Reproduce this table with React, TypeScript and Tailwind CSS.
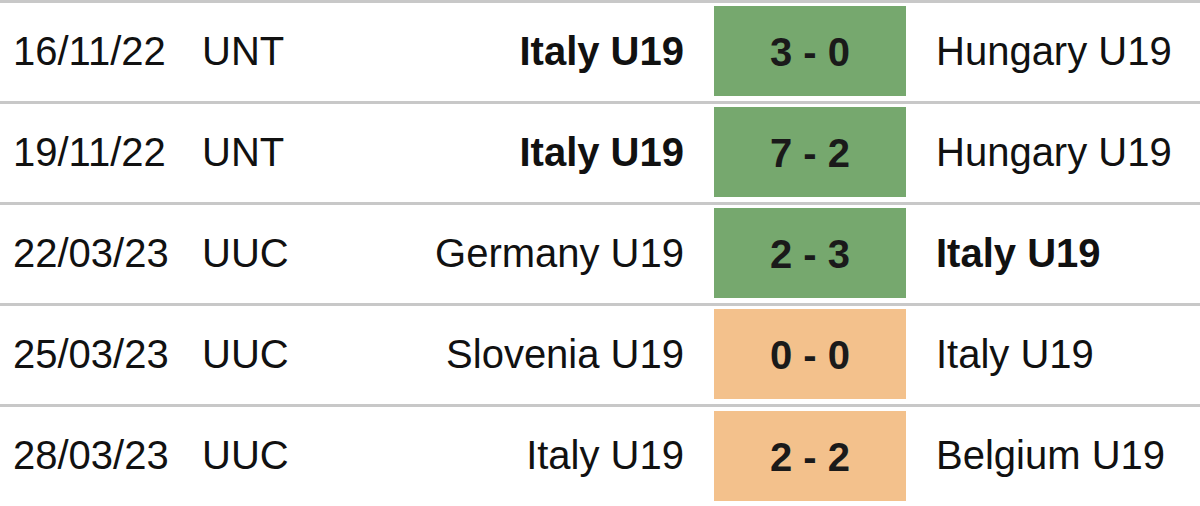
type Match = {
  date: string
  comp: string
  home: string
  away: string
  score: string
  result: "win" | "draw"
  boldHome?: boolean
  boldAway?: boolean
}

const matches: Match[] = [
  { date: "16/11/22", comp: "UNT", home: "Italy U19", away: "Hungary U19", score: "3 - 0", result: "win", boldHome: true },
  { date: "19/11/22", comp: "UNT", home: "Italy U19", away: "Hungary U19", score: "7 - 2", result: "win", boldHome: true },
  { date: "22/03/23", comp: "UUC", home: "Germany U19", away: "Italy U19", score: "2 - 3", result: "win", boldAway: true },
  { date: "25/03/23", comp: "UUC", home: "Slovenia U19", away: "Italy U19", score: "0 - 0", result: "draw" },
  { date: "28/03/23", comp: "UUC", home: "Italy U19", away: "Belgium U19", score: "2 - 2", result: "draw" },
]

export default function App() {
  return (
    <div className="w-[1200px] h-[506px] overflow-hidden bg-white font-['Liberation_Sans',Arial,sans-serif] text-[40px] leading-none text-[#111]">
      {matches.map((m, i) => (
        <div
          key={i}
          className={`flex items-center border-t-[3px] border-[#c8c8c8] ${i === 4 ? "h-[102px]" : "h-[101px]"}`}
        >
          <div className="mb-[3px] w-[202px] pl-[13px]">{m.date}</div>
          <div className="mb-[3px] w-[200px]">{m.comp}</div>
          <div className={`mb-[3px] w-[282px] text-right ${m.boldHome ? "font-bold" : ""}`}>
            {m.home}
          </div>
          <div
            className={`mb-[2px] ml-[30px] flex h-[90px] w-[192px] items-center justify-center pt-[2px] font-bold text-[#1a1a1a] ${
              m.result === "win" ? "bg-[#76a86e]" : "bg-[#f3c18c]"
            }`}
          >
            {m.score}
          </div>
          <div className={`mb-[3px] pl-[30px] ${m.boldAway ? "font-bold" : ""}`}>{m.away}</div>
        </div>
      ))}
    </div>
  )
}
